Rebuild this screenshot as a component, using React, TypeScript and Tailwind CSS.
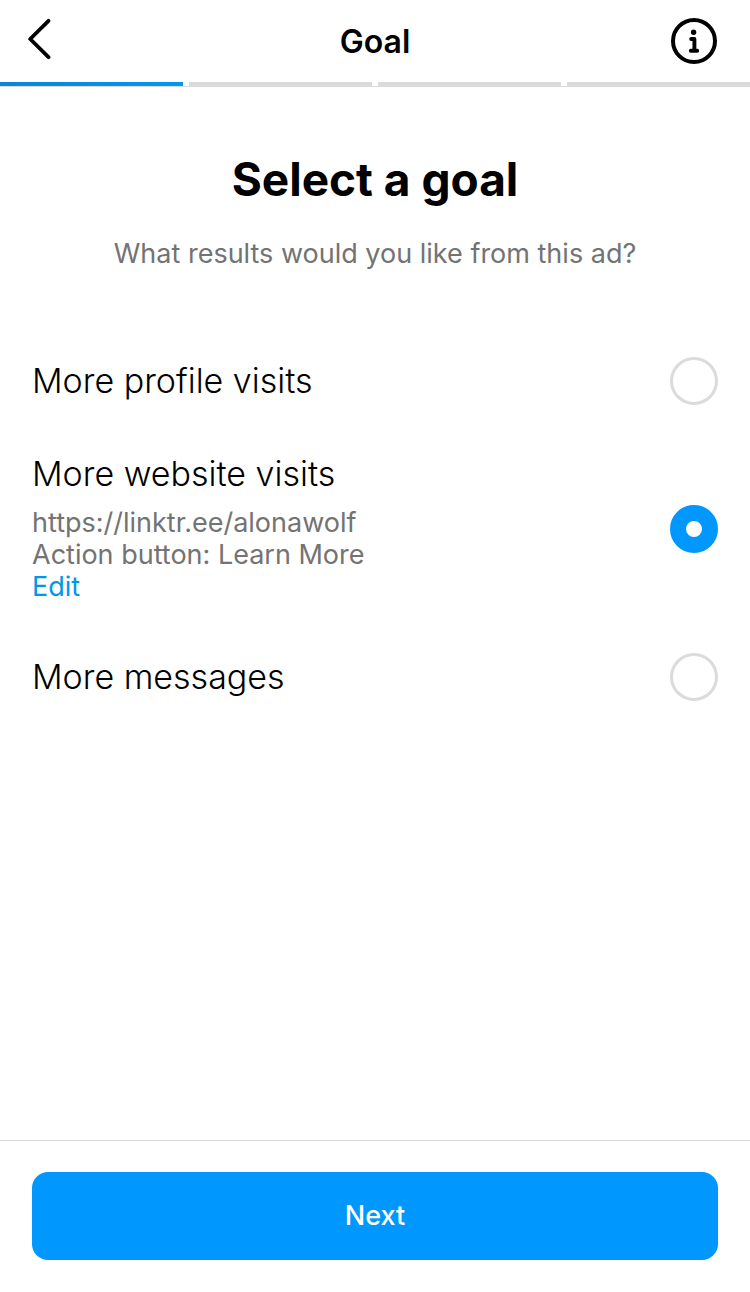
import { useState } from "react";

type Goal = {
  id: string;
  title: string;
  details?: string[];
};

const goals: Goal[] = [
  { id: "profile", title: "More profile visits" },
  {
    id: "website",
    title: "More website visits",
    details: ["https://linktr.ee/alonawolf", "Action button: Learn More"],
  },
  { id: "messages", title: "More messages" },
];

function BackIcon() {
  return (
    <svg width="24" height="42" viewBox="0 0 24 42" fill="none" aria-hidden="true">
      <path
        d="M20.5 2.8L2.2 21L20.5 39.2"
        stroke="currentColor"
        strokeWidth="3.8"
        strokeLinecap="round"
        strokeLinejoin="round"
      />
    </svg>
  );
}

function InfoIcon() {
  return (
    <svg width="48" height="48" viewBox="0 0 48 48" fill="none" aria-hidden="true">
      <circle cx="24" cy="24" r="21" stroke="currentColor" strokeWidth="4" />
      <circle cx="23.6" cy="15.2" r="2.7" fill="currentColor" />
      <path
        d="M21.2 22H24.4V33.5M20.8 33.7H27.2"
        stroke="currentColor"
        strokeWidth="3.9"
        strokeLinecap="round"
        strokeLinejoin="round"
      />
    </svg>
  );
}

function Header() {
  return (
    <header>
      <div className="grid h-[82px] grid-cols-[1fr_auto_1fr] items-center px-7">
        <button type="button" aria-label="Back" className="justify-self-start pb-1">
          <BackIcon />
        </button>
        <p className="pt-0.5 text-[32px] leading-10 font-semibold">Goal</p>
        <button type="button" aria-label="About goals" className="justify-self-end pr-1">
          <InfoIcon />
        </button>
      </div>
      <div className="grid grid-cols-4 gap-1.5 border-b border-[#dbdbdb]">
        <span className="h-1 bg-linear-to-r from-[#0a84dc] to-[#0099ee]" />
        <span className="h-1 bg-[#dbdbdb]" />
        <span className="h-1 bg-[#dbdbdb]" />
        <span className="h-1 bg-[#dbdbdb]" />
      </div>
    </header>
  );
}

function GoalRow({
  goal,
  checked,
  onSelect,
}: {
  goal: Goal;
  checked: boolean;
  onSelect: () => void;
}) {
  return (
    <div className="flex items-center justify-between gap-8 py-6">
      <div>
        <label htmlFor={goal.id} className="block text-[34px] leading-[42px] font-light">
          {goal.title}
        </label>
        {goal.details && (
          <div className="pt-3 pb-0.5 text-[27px] leading-8 text-[#737373]">
            {goal.details.map((line) => (
              <p key={line}>{line}</p>
            ))}
            <button type="button" className="block text-[#0098e6]">
              Edit
            </button>
          </div>
        )}
      </div>
      <input
        id={goal.id}
        type="radio"
        name="goal"
        checked={checked}
        onChange={onSelect}
        className="size-12 shrink-0 appearance-none rounded-full border-3 border-[#dbdbdb] bg-white checked:border-16 checked:border-[#0098ff]"
      />
    </div>
  );
}

export default function App() {
  const [selected, setSelected] = useState("website");

  return (
    <div className="flex min-h-screen flex-col bg-white font-['Inter',sans-serif] text-black">
      <Header />
      <main className="flex-1 px-8 pt-16 pb-8">
        <h1 className="text-center text-[46px] leading-14 font-bold">Select a goal</h1>
        <p className="mt-7 text-center text-[27px] leading-[38px] text-[#737373]">
          What results would you like from this ad?
        </p>
        <div role="radiogroup" aria-label="Goal" className="mt-[60px]">
          {goals.map((goal) => (
            <GoalRow
              key={goal.id}
              goal={goal}
              checked={selected === goal.id}
              onSelect={() => setSelected(goal.id)}
            />
          ))}
        </div>
      </main>
      <footer className="border-t border-[#dbdbdb] px-8 pt-[31px] pb-8">
        <button
          type="button"
          className="h-22 w-full rounded-2xl bg-[#0098ff] text-[27px] leading-9 font-medium text-white"
        >
          Next
        </button>
      </footer>
    </div>
  );
}
